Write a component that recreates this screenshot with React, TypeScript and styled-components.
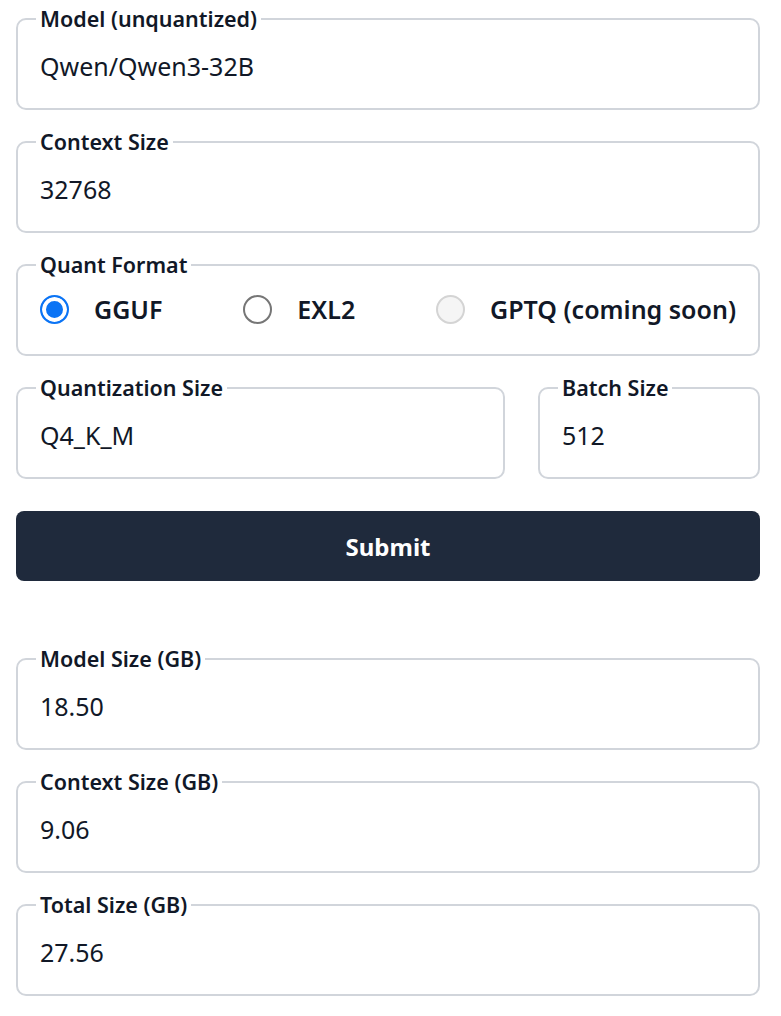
import { useState } from "react";
import styled, { createGlobalStyle } from "styled-components";

const GlobalStyle = createGlobalStyle`
    html, body {
        margin: 0;
        padding: 0;
        background: #ffffff;
    }
    body {
        font-family: "Noto Sans", "Open Sans", "Liberation Sans", sans-serif;
        color: #111827;
    }
`;

const formats = [
    { id: "gguf", label: "GGUF", disabled: false },
    { id: "exl2", label: "EXL2", disabled: false },
    { id: "gptq", label: "GPTQ (coming soon)", disabled: true },
];

export default function App() {
    const [model, setModel] = useState("Qwen/Qwen3-32B");
    const [context, setContext] = useState("32768");
    const [format, setFormat] = useState("gguf");
    const [quant, setQuant] = useState("Q4_K_M");
    const [batch, setBatch] = useState("512");

    return (
        <Page>
            <GlobalStyle />
            <Form onSubmit={(e) => e.preventDefault()}>
                <Field>
                    <Legend>Model (unquantized)</Legend>
                    <Input value={model} onChange={(e) => setModel(e.target.value)} />
                </Field>
                <Field>
                    <Legend>Context Size</Legend>
                    <Input value={context} onChange={(e) => setContext(e.target.value)} />
                </Field>
                <Field>
                    <Legend>Quant Format</Legend>
                    <RadioRow>
                        {formats.map((f) => (
                            <RadioLabel key={f.id}>
                                <Radio
                                    type="radio"
                                    name="format"
                                    checked={format === f.id}
                                    disabled={f.disabled}
                                    onChange={() => setFormat(f.id)}
                                />
                                {f.label}
                            </RadioLabel>
                        ))}
                    </RadioRow>
                </Field>
                <Row>
                    <Field $width="489px">
                        <Legend>Quantization Size</Legend>
                        <Input value={quant} onChange={(e) => setQuant(e.target.value)} />
                    </Field>
                    <Field $width="222px">
                        <Legend>Batch Size</Legend>
                        <Input value={batch} onChange={(e) => setBatch(e.target.value)} />
                    </Field>
                </Row>
                <SubmitButton type="submit">Submit</SubmitButton>
            </Form>

            <Results>
                <Field>
                    <Legend>Model Size (GB)</Legend>
                    <Output>18.50</Output>
                </Field>
                <Field>
                    <Legend>Context Size (GB)</Legend>
                    <Output>9.06</Output>
                </Field>
                <Field>
                    <Legend>Total Size (GB)</Legend>
                    <Output>27.56</Output>
                </Field>
            </Results>
        </Page>
    );
}

const Page = styled.div`
    width: 744px;
    padding: 5px 21px 20px 16px;
    display: flex;
    flex-direction: column;
    gap: 64px;
`;

const Form = styled.form`
    display: flex;
    flex-direction: column;
    gap: 18px;
`;

const Results = styled.div`
    display: flex;
    flex-direction: column;
    gap: 18px;
`;

const Row = styled.div`
    display: flex;
    justify-content: space-between;
`;

const Field = styled.fieldset<{ $width?: string }>`
    margin: 0;
    min-width: 0;
    width: ${(p) => p.$width ?? "auto"};
    box-sizing: border-box;
    border: 2px solid #d1d5db;
    border-radius: 10px;
    padding: 0 22px 25px;
`;

const Legend = styled.legend`
    padding: 0 4px;
    margin-left: -4px;
    font-size: 21.5px;
    font-weight: 600;
    line-height: 28px;
    color: #111827;
`;

const Input = styled.input`
    display: block;
    width: 100%;
    box-sizing: border-box;
    margin: 16px 0 0;
    padding: 0;
    border: none;
    outline: none;
    background: transparent;
    font-family: inherit;
    font-size: 25px;
    line-height: 34px;
    height: 34px;
    color: #111827;
`;

const Output = styled.div`
    margin-top: 16px;
    font-size: 25px;
    line-height: 34px;
    height: 34px;
    color: #111827;
`;

const RadioRow = styled.div`
    display: flex;
    justify-content: space-between;
    align-items: center;
    margin: 13px 0 3px;
    height: 34px;
`;

const RadioLabel = styled.label`
    display: flex;
    align-items: center;
    gap: 25px;
    font-size: 25px;
    font-weight: 600;
    color: #111827;
    cursor: pointer;
`;

const Radio = styled.input`
    appearance: none;
    margin: 0;
    width: 29px;
    height: 29px;
    border-radius: 50%;
    border: 2px solid #767676;
    background: #fff;
    box-sizing: border-box;
    cursor: pointer;

    &:checked {
        border: 2px solid #0b74f5;
        background: #0b74f5;
        box-shadow: inset 0 0 0 4px #fff;
    }
    &:disabled {
        border-color: #d4d4d4;
        background: #f5f5f5;
        cursor: default;
    }
`;

const SubmitButton = styled.button`
    margin-top: 14px;
    height: 70px;
    border: none;
    border-radius: 8px;
    background: #1f2a3c;
    color: #fff;
    font-family: inherit;
    font-size: 24px;
    font-weight: 700;
    cursor: pointer;
`;
